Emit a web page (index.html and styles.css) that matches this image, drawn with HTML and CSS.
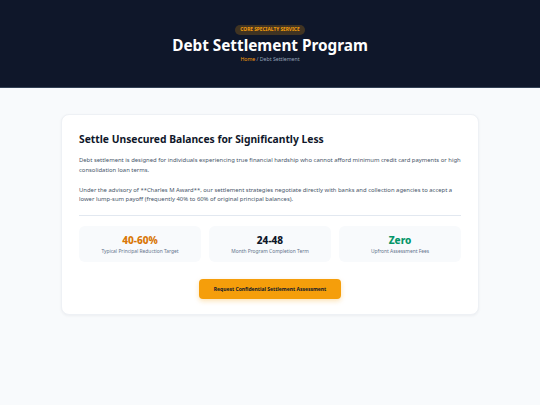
FILE: index.html
```html
<!DOCTYPE html>
<html lang="en">
<head>
    <meta charset="UTF-8">
    <meta name="viewport" content="width=device-width, initial-scale=1.0">
    <title>Debt Settlement Program</title>
    <link rel="stylesheet" href="styles.css">
</head>
<body>
    <header class="hero">
        <span class="badge">Core Specialty Service</span>
        <h1 class="hero-title">Debt Settlement Program</h1>
        <div class="crumbs"><a href="#">Home</a> / Debt Settlement</div>
    </header>

    <main class="content">
        <section class="card">
            <h2 class="card-title">Settle Unsecured Balances for Significantly Less</h2>
            <p>Debt settlement is designed for individuals experiencing true financial hardship who cannot afford minimum credit card payments or high consolidation loan terms.</p>
            <p>Under the advisory of **Charles M Award**, our settlement strategies negotiate directly with banks and collection agencies to accept a lower lump-sum payoff (frequently 40% to 60% of original principal balances).</p>

            <div class="stats">
                <div class="stat">
                    <div class="stat-num orange">40-60%</div>
                    <div class="stat-label">Typical Principal Reduction Target</div>
                </div>
                <div class="stat">
                    <div class="stat-num">24-48</div>
                    <div class="stat-label">Month Program Completion Term</div>
                </div>
                <div class="stat">
                    <div class="stat-num green">Zero</div>
                    <div class="stat-label">Upfront Assessment Fees</div>
                </div>
            </div>

            <div class="cta-row">
                <button class="cta">Request Confidential Settlement Assessment</button>
            </div>
        </section>
    </main>
</body>
</html>
```

FILE: styles.css
```css
body {
    margin: 0;
    font-family: "Noto Sans", "Open Sans", sans-serif;
    background-color: #f8fafc;
    color: #0f172a;
    height: 405px;
}

.hero {
    background-color: #0f172a;
    height: 88px;
    box-sizing: border-box;
    padding-top: 25px;
    display: flex;
    flex-direction: column;
    align-items: center;
    border-bottom: 1px solid #334155;
}

.badge {
    display: inline-block;
    background-color: rgba(245, 158, 11, 0.22);
    color: #f59e0b;
    font-size: 4.8px;
    font-weight: 700;
    text-transform: uppercase;
    padding: 2px 5px;
    line-height: 5.5px;
    border-radius: 10px;
}

.hero-title {
    margin: 1px 0 0;
    color: #ffffff;
    font-size: 15.3px;
    font-weight: 700;
    line-height: 18px;
}

.crumbs {
    margin-top: 2px;
    font-size: 5.2px;
    line-height: 7px;
    color: #94a3b8;
}

.crumbs a {
    color: #f59e0b;
    text-decoration: none;
}

.content {
    padding: 26px 61px 0;
}

.card {
    background-color: #ffffff;
    border: 1px solid #eef1f5;
    border-radius: 8px;
    padding: 16px 17px 15px;
    box-shadow: 0 1px 3px rgba(15, 23, 42, 0.05);
}

.card-title {
    margin: 0 0 9px;
    font-size: 10.3px;
    font-weight: 700;
    line-height: 16px;
    color: #0f172a;
}

.card p {
    margin: 0 0 10.5px;
    font-size: 5.9px;
    line-height: 9.5px;
    color: #475569;
}

.stats {
    border-top: 1px solid #e2e8f0;
    padding-top: 10px;
    display: grid;
    grid-template-columns: repeat(3, 1fr);
    gap: 8px;
}

.stat {
    background-color: #f8fafc;
    border-radius: 6px;
    height: 36px;
    display: flex;
    flex-direction: column;
    align-items: center;
    justify-content: center;
}

.stat-num {
    font-size: 10px;
    font-weight: 800;
    line-height: 13px;
    color: #0f172a;
}

.stat-num.orange {
    color: #d97706;
}

.stat-num.green {
    color: #059669;
}

.stat-label {
    font-size: 4.9px;
    color: #64748b;
    margin-top: 1px;
}

.cta-row {
    display: flex;
    justify-content: center;
    margin-top: 17px;
}

.cta {
    background-color: #f59e0b;
    color: #0f172a;
    border: none;
    border-radius: 4px;
    font-family: inherit;
    font-size: 5px;
    font-weight: 700;
    height: 20px;
    width: 142px;
    box-shadow: 0 2px 5px rgba(245, 158, 11, 0.3);
    cursor: pointer;
}
```
